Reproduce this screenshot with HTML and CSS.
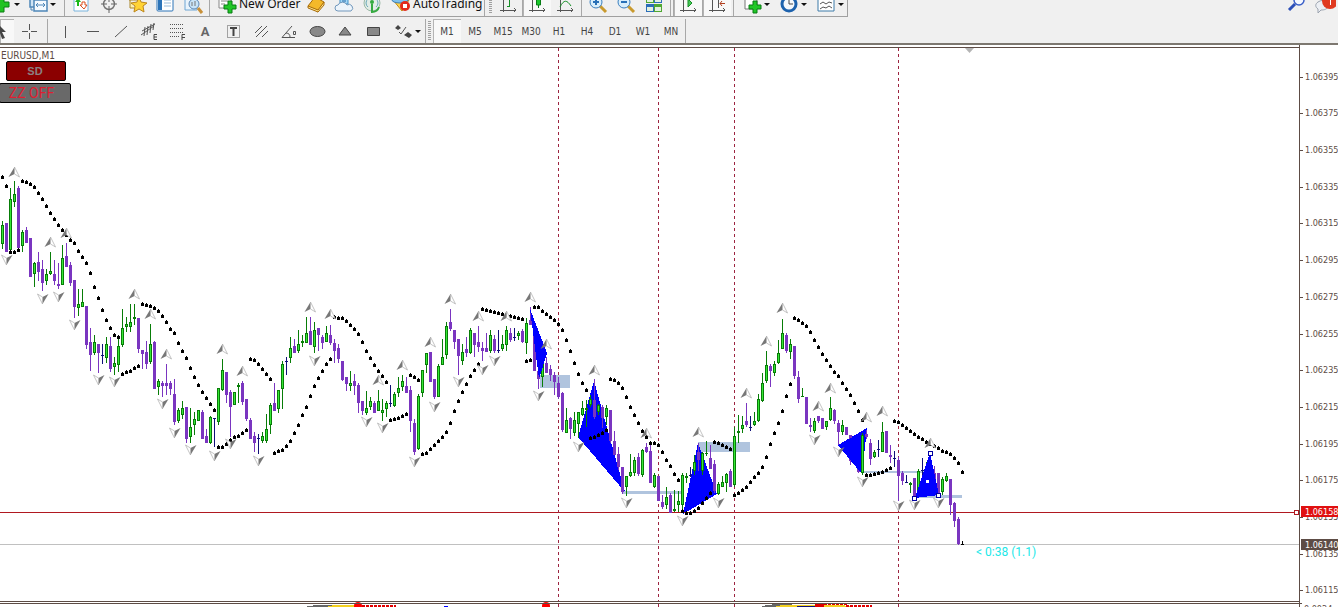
FILE: index.html
```html
<!DOCTYPE html>
<html lang="en">
<head>
    <meta charset="UTF-8">
    <meta name="viewport" content="width=device-width, initial-scale=1.0">
    <title>EURUSD,M1</title>
    <link rel="stylesheet" href="styles.css">
</head>
<body>
    <header class="toolbars">
        <div class="bar bar-main">
            <div class="group group-main">
                <button class="tool new-chart" aria-label="New chart"><svg class="icon plus" viewBox="0 0 24 24"><path d="M9 5h5v5h5v5h-5v5H9v-5H4v-5h5z" fill="#22c322" stroke="#0a7d12"/></svg><span class="arrow"></span></button>
                <button class="tool profiles" aria-label="Profiles"><svg class="icon" viewBox="0 0 24 24"><path d="M4 4h14v11H4z" fill="#cfe4f5" stroke="#4d86b8" stroke-width="1.500"/><path d="M8 8h13v11H8z" fill="#f4faff" stroke="#4d86b8" stroke-width="1.500"/><path d="M10 13h9M12 11l-2 2 2 2M17 11l2 2-2 2M5 15v3h2" fill="none" stroke="#4d86b8"/></svg><span class="arrow"></span></button>
                <span class="sep"></span>
                <button class="tool" aria-label="Market watch"><svg class="icon" viewBox="0 0 24 24"><path d="M5 3h14v16H5z" fill="#fff" stroke="#79b3dc"/><path d="M9 6l3 4h-2v4H8v-4H6z" fill="#19b81c"/><path d="M15 17l-4-4h2v-3h3v3h2z" fill="#fff" stroke="#d9501e"/></svg></button>
                <button class="tool" aria-label="Data window"><svg class="icon" viewBox="0 0 24 24"><circle cx="12" cy="12" r="5.500" fill="none" stroke="#777" stroke-width="1.500"/><path d="M12 3v7M12 14v7M4 12h6M14 12h6" stroke="#666"/></svg></button>
                <button class="tool" aria-label="Navigator"><svg class="icon" viewBox="0 0 24 24"><path d="M4 3h9v5H4zM5 8v8h4" fill="#fff2a8" stroke="#a9862d"/><path d="M14 5l2 5 6 1-4 3 1 6-5-3-5 3 1-6-4-3 6-1z" fill="#ffd335" stroke="#bd861d"/></svg></button>
                <button class="tool" aria-label="Terminal"><svg class="icon" viewBox="0 0 24 24"><rect x="4" y="3" width="16" height="16" rx="1" fill="#fff" stroke="#2d74b8"/><path d="M5 4h4v14H5z" fill="#2d74b8"/><path d="M11 8h7M11 11h7M11 14h7" stroke="#9bbcda"/></svg></button>
                <button class="tool" aria-label="Strategy tester"><svg class="icon" viewBox="0 0 24 24"><path d="M4 3h12v15H4z" fill="#e8f3fc" stroke="#6fa6d4"/><circle cx="13" cy="12" r="5" fill="#c8e4f7" stroke="#5d88b4"/><path d="M11 14v-4M14 14v-5" stroke="#777"/><path d="M17 16l4 5" stroke="#c89038" stroke-width="3"/></svg></button>
                <span class="sep"></span>
                <button class="tool new-order"><svg class="icon" viewBox="0 0 24 24"><path d="M4 3h12v14H4z" fill="#fff" stroke="#888"/><path d="M6 7h7M6 10h7M6 13h4" stroke="#888"/><path d="M13 10h4v4h4v4h-4v4h-4v-4H9v-4h4z" fill="#21c727" stroke="#087d15"/></svg>New Order</button>
                <button class="tool" aria-label="MetaEditor"><svg class="icon" viewBox="0 0 24 24"><path d="M4 14l7-9 9 5-6 10z" fill="#f4b92a" stroke="#a76b0a"/><path d="M4 14l10 4 6-8v3l-6 7L4 16z" fill="#ffe58a" stroke="#a76b0a"/></svg></button>
                <button class="tool" aria-label="Virtual hosting"><svg class="icon" viewBox="0 0 24 24"><path d="M8 3h8v9H8z" fill="#a6d8f7" stroke="#3f8fc6"/><path d="M10 6h4M10 9h4" stroke="#276ba8"/><path d="M6 19a3 3 0 0 1 0-6 5 5 0 0 1 9 0 3 3 0 0 1 4 6z" fill="#edf4fb" stroke="#7298bc"/></svg></button>
                <button class="tool" aria-label="Signals"><svg class="icon" viewBox="0 0 24 24"><circle cx="12" cy="11" r="8" fill="#e2ece6" stroke="#9ab9a6"/><path d="M8 15a5 5 0 0 1 0-8M16 15a5 5 0 0 0 0-8" fill="none" stroke="#6aa9b8"/><path d="M12 12v8c3 0 6-2 7-5" fill="none" stroke="#35aa40" stroke-width="2"/><circle cx="12" cy="10" r="2" fill="#35aa40"/></svg></button>
                <button class="tool auto"><svg class="icon" viewBox="0 0 24 24"><path d="M4 9h16l-7 11z" fill="#ffd34c" stroke="#c28b14"/><ellipse cx="11" cy="9" rx="8" ry="3" fill="#7ec0ee" stroke="#3d7eb6"/><circle cx="16" cy="15" r="5" fill="#e22b1c"/><path d="M14 13h4v4h-4z" fill="#fff"/></svg>AutoTrading</button>
                <span class="sep"></span>
                <span class="grip"></span>
                <button class="tool" aria-label="Bar chart"><svg class="icon" viewBox="0 0 24 24"><path d="M7.500 3v17M4 18.500h16M18 16l2 2-2 2" fill="none" stroke="#555"/><path d="M13.500 5v10M11 14.500h3M14 7.500h3" stroke="#168f26"/></svg></button>
                <span class="sep tight"></span>
                <button class="tool pressed" aria-label="Candlesticks"><svg class="icon" viewBox="0 0 24 24"><path d="M7.500 3v17M4 18.500h16M18 16l2 2-2 2" fill="none" stroke="#555"/><path d="M13.500 3v13" stroke="#087d15"/><path d="M11.500 5h4v8h-4z" fill="#1ac62a" stroke="#087d15"/></svg></button>
                <button class="tool" aria-label="Line chart"><svg class="icon" viewBox="0 0 24 24"><path d="M7.500 3v17M4 18.500h16M18 16l2 2-2 2" fill="none" stroke="#555"/><path d="M7 15c4-8 7-7 11-1" fill="none" stroke="#168f26"/></svg></button>
                <span class="sep"></span>
                <button class="tool" aria-label="Zoom in"><svg class="icon" viewBox="0 0 24 24"><path d="M14 14l6 6" stroke="#c99a2e" stroke-width="3"/><circle cx="10" cy="10" r="6" fill="#d8eefb" stroke="#3b7fbf"/><path d="M7 10h6M10 7v6" stroke="#2870b7" stroke-width="2"/></svg></button>
                <button class="tool" aria-label="Zoom out"><svg class="icon" viewBox="0 0 24 24"><path d="M14 14l6 6" stroke="#c99a2e" stroke-width="3"/><circle cx="10" cy="10" r="6" fill="#d8eefb" stroke="#3b7fbf"/><path d="M7 10h6" stroke="#2870b7" stroke-width="2"/></svg></button>
                <button class="tool" aria-label="Tile windows"><svg class="icon" viewBox="0 0 24 24"><path d="M4 3h8v8H4zM12 12h8v8h-8z" fill="#50a832"/><path d="M12 3h8v8h-8zM4 12h8v8H4z" fill="#2c6eb9"/><path d="M5 6h6v4H5zM13 6h6v4h-6zM5 15h6v4H5zM13 15h6v4h-6z" fill="#e3f1df"/></svg></button>
                <span class="sep"></span>
                <span class="sep tight"></span>
                <button class="tool pressed" aria-label="Auto scroll"><svg class="icon" viewBox="0 0 24 24"><path d="M7.500 3v17M4 18.500h16M18 16l2 2-2 2" fill="none" stroke="#555"/><path d="M12 7l4 4-4 4z" fill="#49c958" stroke="#168f26"/></svg></button>
                <span class="sep tight"></span>
                <button class="tool pressed" aria-label="Chart shift"><svg class="icon" viewBox="0 0 24 24"><path d="M7.500 3v17M4 18.500h16M18 16l2 2-2 2M13.500 3v13" fill="none" stroke="#555"/><path d="M20 11.500h-5M17 9l-2 2.500 2 2.500" fill="none" stroke="#b13e1e"/></svg></button>
                <span class="sep"></span>
                <button class="tool drop" aria-label="Indicators"><svg class="icon" viewBox="0 0 24 24"><path d="M5 3h12v14H5z" fill="#fff" stroke="#777"/><path d="M13 9h4v4h4v4h-4v4h-4v-4H9v-4h4z" fill="#21c727" stroke="#087d15"/></svg><span class="arrow"></span></button>
                <button class="tool drop" aria-label="Periods"><svg class="icon" viewBox="0 0 24 24"><circle cx="12" cy="12" r="7" fill="#f4f8fc" stroke="#1d62ad" stroke-width="3"/><path d="M12 7v5h4" fill="none" stroke="#444"/></svg><span class="arrow"></span></button>
                <button class="tool drop" aria-label="Templates"><svg class="icon" viewBox="0 0 24 24"><path d="M4 3h16v16H4z" fill="#fff" stroke="#3c7aa8"/><path d="M4 4h16v4H4z" fill="#69a5d0"/><path d="M6 12l3-2 3 2 3-2 3 1M6 17l3-2 3 1 3-2 3 2" fill="none" stroke="#555"/></svg><span class="arrow"></span></button>
            </div>
            <div class="corner">
                <button class="tool" aria-label="Search"><svg class="icon" viewBox="0 0 24 24"><circle cx="15" cy="8" r="5" fill="#f5f8ff" stroke="#3a5fc8" stroke-width="1.500"/><path d="M11 12l-6 6" stroke="#2c4fb8" stroke-width="3"/></svg></button>
                <button class="tool" aria-label="Messages"><svg class="icon" viewBox="0 0 24 24"><path d="M6 10c6-4 12 0 10 5-2 3-5 3-7 3l-3 3v-4c-3-2-3-5 0-7z" fill="#eceff4" stroke="#9aa2ae"/><circle cx="18" cy="9" r="8" fill="#e03a20"/><path d="M18.500 3v10" stroke="#fff"/></svg></button>
            </div>
        </div>
        <div class="bar bar-draw">
            <button class="tool cursor pressed" aria-label="Cursor"><svg class="icon" viewBox="0 0 24 24"><path d="M7 4l9 9h-4l3 6-3 1-2-6-3 3z" fill="#444"/></svg></button>
            <button class="tool" aria-label="Crosshair"><svg class="icon" viewBox="0 0 24 24"><path d="M12.500 5v6M12.500 14v6M5 12.500h6M14 12.500h6" stroke="#555"/></svg></button>
            <span class="sep"></span>
            <button class="tool" aria-label="Vertical line"><svg class="icon" viewBox="0 0 24 24"><path d="M12.500 7v12" stroke="#555"/></svg></button>
            <button class="tool" aria-label="Horizontal line"><svg class="icon" viewBox="0 0 24 24"><path d="M6 12.500h12" stroke="#555"/></svg></button>
            <button class="tool" aria-label="Trendline"><svg class="icon" viewBox="0 0 24 24"><path d="M6 18L18 7" stroke="#555"/></svg></button>
            <button class="tool" aria-label="Equidistant channel"><svg class="icon" viewBox="0 0 24 24"><path d="M4 16L17 7M5 12L18 5M8 8l-1 9M11 7l-1 9M14 5l-1 9M17 4l-1 7" stroke="#555"/><path d="M20 15.500h-3v5h3M17 18h3" fill="none" stroke="#444"/></svg></button>
            <button class="tool" aria-label="Fibonacci"><svg class="icon" viewBox="0 0 24 24"><path d="M5 5.500h14M5 9.500h14M5 13.500h14M5 17.500h9" stroke="#555" stroke-dasharray="1 1"/><path d="M20 15.500h-3V21M17 18.500h3" fill="none" stroke="#444"/></svg></button>
            <button class="tool letter">A</button>
            <button class="tool" aria-label="Text label"><svg class="icon" viewBox="0 0 24 24"><path d="M6.500 6.500h12v12h-12z" fill="none" stroke="#555" stroke-dasharray="1 1"/><path d="M9 9h7M12.500 9v8" stroke="#444" stroke-width="2"/></svg></button>
            <button class="tool" aria-label="Parallel lines"><svg class="icon" viewBox="0 0 24 24"><path d="M6 14l7-7M7 18L18 7M13 18l6-6" stroke="#555"/></svg></button>
            <button class="tool" aria-label="Angle"><svg class="icon" viewBox="0 0 24 24"><path d="M15 7L5 18.500h13M9 14c3 0 4 2 4 4" fill="none" stroke="#555"/><path d="M16.500 12.500h2v3h-2z" fill="none" stroke="#555"/></svg></button>
            <button class="tool" aria-label="Ellipse"><svg class="icon" viewBox="0 0 24 24"><ellipse cx="12.500" cy="12.500" rx="7.500" ry="5" fill="#888" stroke="#444"/></svg></button>
            <button class="tool" aria-label="Triangle"><svg class="icon" viewBox="0 0 24 24"><path d="M12 8l6 8H6z" fill="#888" stroke="#444"/></svg></button>
            <button class="tool" aria-label="Rectangle"><svg class="icon" viewBox="0 0 24 24"><path d="M6.500 8.500h12v8h-12z" fill="#888" stroke="#444"/></svg></button>
            <button class="tool drop" aria-label="Arrows"><svg class="icon" viewBox="0 0 24 24"><path d="M7 6l3 3-3 2-3-2zM17 13l4 3-3 3-5-3z" fill="#444"/><path d="M8 13l2 2 5-7" fill="none" stroke="#555"/></svg><span class="arrow"></span></button>
            <span class="sep tight"></span>
            <span class="grip"></span>
            <button class="tool pressed">M1</button>
            <button class="tool">M5</button>
            <button class="tool">M15</button>
            <button class="tool">M30</button>
            <button class="tool">H1</button>
            <button class="tool">H4</button>
            <button class="tool">D1</button>
            <button class="tool">W1</button>
            <button class="tool">MN</button>
            <span class="sep tight"></span>
        </div>
    </header>

    <main class="workspace">
        <div class="chart">
            <svg class="plot">
                <g id="plot" transform="translate(0 -45)"></g>
            </svg>
            <div class="overlay">
                <span class="symbol">EURUSD,M1</span>
                <button class="sd">SD</button>
                <button class="zz">ZZ OFF</button>
            </div>
        </div>
        <svg class="axis">
            <g id="axis" transform="translate(0 -45)"></g>
        </svg>
    </main>

    <script src="chart.js"></script>
</body>
</html>
```
FILE: styles.css
```css
body {
    margin: 0;
    height: 100vh;
    display: flex;
    flex-direction: column;
    overflow: hidden;
    background: #fff;
    font-family: "DejaVu Sans Condensed", "DejaVu Sans", sans-serif;
    font-size: 10px;
}
.toolbars {
    background: #f0f0f0;
    border-bottom: 2px solid #7d7870;
    overflow: hidden;
}
.bar {
    display: flex;
}
.bar-main {
    margin-top: -8px;
    justify-content: space-between;
}
.group {
    display: flex;
    align-items: center;
}
.group-main {
    height: 24px;
    border-right: 1px solid #a0a0a0;
    border-bottom: 1px solid #a0a0a0;
}
.corner {
    display: flex;
    height: 24px;
}
.bar-draw {
    box-sizing: border-box;
    height: 26px;
    padding-top: 2px;
    align-items: center;
}
.tool {
    flex: none;
    display: flex;
    align-items: center;
    justify-content: center;
    width: 28px;
    height: 24px;
    padding: 0;
    border: 0;
    background: none;
    color: #444;
    font: inherit;
}
.pressed {
    background: #f8f8f8;
    box-shadow: inset 1px 1px #b4b4b4;
}
.icon {
    flex: none;
    width: 24px;
    height: 24px;
}
.arrow {
    border: 3px solid transparent;
    border-top-color: #111;
    border-bottom: 0;
}
.new-chart {
    width: 20px;
    justify-content: flex-end;
}
.profiles {
    width: 42px;
}
.new-order, .auto {
    width: 90px;
    justify-content: flex-start;
    padding: 0 0 2px 3px;
    color: #111;
    font-family: "Noto Sans", sans-serif;
    font-size: 12px;
    white-space: nowrap;
}
.auto {
    width: 96px;
}
.drop {
    width: 37px;
}
.bar-draw .drop {
    width: 38px;
}
.cursor {
    width: 14px;
    margin-right: 1px;
    justify-content: flex-end;
}
.letter {
    font-family: Roboto, sans-serif;
    font-size: 13px;
    font-weight: bold;
    color: #666;
}
.sep {
    flex: none;
    width: 1px;
    height: 24px;
    margin: 0 2px;
    background: #a8a8a8;
}
.bar-draw .sep {
    margin: 0 3px 0 4px;
}
.sep.tight, .bar-draw .sep.tight {
    margin: 0;
}
.grip {
    flex: none;
    width: 3px;
    height: 20px;
    margin: 0 2px;
    background: repeating-linear-gradient(#a0a0a0 0 1px, #f0f0f0 1px 2px);
}
.workspace {
    flex: 1;
    min-height: 0;
    display: flex;
}
.chart {
    flex: 1;
    min-width: 0;
    position: relative;
    border-right: 1px solid #5d4c45;
    overflow: hidden;
}
.plot {
    display: block;
    width: 100%;
    height: 100%;
}
.axis {
    flex: none;
    width: 38px;
    height: 100%;
    font-size: 9px;
}
.overlay {
    position: absolute;
    top: 5px;
    left: 0;
    display: flex;
    flex-direction: column;
    align-items: flex-start;
}
.symbol {
    padding-left: 1px;
    line-height: 11px;
    color: #5d4c45;
}
.sd, .zz {
    box-sizing: border-box;
    height: 20px;
    padding: 0;
    border: 1px solid #000;
    border-radius: 2px;
}
.sd {
    width: 60px;
    margin-left: 6px;
    padding-right: 2px;
    background: #8b0000;
    color: #8c8080;
    font: bold 11px "Liberation Sans Narrow", "Liberation Sans", sans-serif;
}
.zz {
    width: 72px;
    margin: 2px 0 0 -1px;
    padding-right: 7px;
    background: #696969;
    color: #e01e32;
    font: 14px Roboto, sans-serif;
}
.timer {
    font: 12px Roboto, sans-serif;
    fill: #20e8e8;
}
.crisp {
    shape-rendering: crispEdges;
}
```
FILE: chart.js
```js
// one candle every 4px: colour, high, body top, body bottom, low
const candles = `g 221 225 244 249,p 223 223 252 252,g 188 199 250 250,g 181 194 202 207,p 186 188 248 248,g 230 232 246 252
p 227 230 243 243,p 238 238 277 277,g 262 263 274 287,p 252 262 272 281,p 260 269 283 291,g 269 274 281 285,g 252 271 274 275
p 260 274 281 285,p 263 284 286 289,g 245 258 285 285,p 243 256 267 267,p 262 265 283 286,p 280 280 307 318,g 289 304 308 316
g 289 302 307 307,p 306 306 345 349,p 328 342 355 371,g 335 342 353 355,p 344 344 353 373,n 344 355 356 364,g 337 344 358 363
p 337 346 369 372,g 357 363 367 375,g 337 346 365 372,g 309 328 345 347,g 317 324 327 332,g 304 322 327 332,g 304 317 319 325
p 318 318 349 353,p 350 350 354 369,p 341 352 364 369,g 324 344 362 364,p 341 342 389 389,g 379 381 387 395,p 381 383 386 397
p 364 383 386 395,p 381 383 389 395,p 379 394 422 425,g 408 410 421 423,g 401 408 415 419,p 407 407 439 443,g 408 427 437 443
g 412 419 425 435,g 410 410 421 421,p 410 412 439 439,p 429 436 443 443,g 416 417 443 444,n 418 418 419 447,g 388 388 422 425
g 359 370 390 391,p 372 372 395 403,p 390 392 407 437,g 392 392 405 405,g 383 385 387 403,p 381 383 402 405,p 399 399 419 421
p 418 420 439 439,p 432 436 443 452,n 434 438 439 454,g 432 436 441 443,g 414 429 441 443,g 403 405 425 434,p 383 403 411 411
g 390 390 409 413,g 361 364 389 409,n 357 361 362 375,g 337 348 358 363,p 339 346 353 353,g 330 344 351 353,g 335 341 343 347
g 317 333 343 343,p 317 331 345 345,g 322 330 347 353,p 328 328 335 351,p 335 337 343 349,g 326 333 342 342,p 325 335 343 345
p 339 343 351 363,p 344 348 359 363,p 361 361 380 381,p 377 377 384 391,g 371 383 386 391,p 374 381 386 395,p 383 385 403 413
p 401 401 411 415,g 391 408 413 415,g 397 401 407 410,p 401 403 413 413,g 390 401 411 411,g 399 410 413 421,g 401 403 409 417
n 385 403 404 407,g 392 394 406 407,g 377 388 393 397,g 375 381 387 391,p 377 386 393 393,p 386 390 421 432,p 419 423 452 455
g 394 396 449 450,g 370 370 393 397,g 353 353 365 373,p 352 352 382 382,p 379 379 397 399,g 364 366 397 397,g 339 357 365 365
g 322 326 355 359,p 309 322 329 331,p 330 330 342 349,p 339 339 356 375,g 344 352 361 365,p 337 349 353 357,g 328 330 353 354
p 333 333 345 357,p 326 342 347 352,p 342 348 351 361,p 333 348 352 352,g 330 335 351 353,p 335 339 351 353,n 330 350 351 353
g 335 344 349 351,g 326 330 345 351,p 328 333 340 342,n 328 337 338 341,g 331 333 336 340,p 329 331 342 343,g 318 323 343 354
p 307 320 325 325,p 330 330 371 371,p 360 371 379 389,g 354 363 377 387,p 357 363 373 373,p 365 369 375 381,p 372 375 382 395
p 377 383 397 399,p 392 393 430 432,g 408 420 433 433,p 417 418 429 439,g 412 420 433 436,g 412 412 424 438,g 401 408 415 416
g 400 408 410 427,g 395 399 405 407,p 379 400 417 419,g 404 405 412 415,p 405 407 418 428,g 405 408 417 425,p 410 410 441 443
p 431 441 455 455,p 447 454 467 470,p 467 467 492 494,g 476 476 487 496,g 454 472 476 477,g 457 460 473 476,p 453 457 474 476
g 449 450 475 477,p 443 447 452 453,p 443 451 483 483,g 473 475 487 488,p 476 476 501 501,p 495 502 507 509,g 487 497 505 509
p 493 495 513 513,g 490 509 511 512,g 491 501 505 512,g 473 475 505 513,g 473 476 478 483,n 467 475 476 477,g 455 462 471 475
p 443 452 460 471,g 452 453 471 475,g 441 453 454 456,p 445 458 469 469,p 460 464 491 493,g 482 484 494 495,g 476 482 487 487
g 473 474 483 492,p 469 471 487 487,g 427 436 485 487,g 415 431 433 443,g 416 425 429 433,p 403 421 425 427,n 416 427 428 431
g 412 421 425 426,g 394 399 421 422,g 373 383 401 402,g 351 365 381 383,p 364 366 371 387,g 361 364 373 376,g 340 353 363 364
g 319 333 349 349,p 333 335 351 353,g 339 344 352 359,p 346 346 376 379,p 371 377 399 403,g 388 396 397 397,p 397 397 424 424
p 418 425 427 432,g 418 421 431 433,p 416 416 421 423,p 418 418 429 429,g 421 421 427 430,g 397 408 420 421,p 409 410 421 424
p 420 423 432 445,g 420 425 432 435,p 427 427 435 435,p 435 435 461 465,p 436 446 461 464,p 447 461 472 473,g 433 435 473 475
p 430 434 437 439,p 439 443 459 465,g 450 452 457 458,n 440 449 450 457,g 422 432 452 452,p 431 431 453 453,p 445 455 457 463
n 451 458 459 467,p 457 460 476 501,p 471 473 481 485,n 475 482 483 483,g 482 483 485 493,p 478 478 497 498,g 469 471 494 495
n 458 470 471 475,g 462 468 473 475,p 453 467 472 476,p 466 473 481 485,p 473 473 497 497,g 477 479 492 495,g 473 476 481 482
p 479 479 505 515,p 502 503 521 527,p 517 519 544 545,k 541 544 545 545`.split(/[,\n]/).map(c => c.split(' '));

// parabolic SAR, one dot per candle
const sar = [177, 186, 252, 252, 250,
    181, 182, 184, 187, 193, 199, 206, 213, 219, 225, 230, 235, 240, 243, 251, 257, 263, 273, 287, 298, 310, 320, 328, 335, 337,
    374, 372, 371, 368, 366,
    304, 305, 306, 308, 311, 316, 322, 329, 333, 343, 351, 358, 368, 377, 385, 392, 398, 404, 410,
    447, 447, 444, 440, 437, 436, 433, 430,
    359, 360, 364, 369, 374, 379,
    453, 451, 450, 446, 441, 433, 425, 415, 407, 396, 386, 378, 371, 364, 359,
    317, 318, 318, 321, 325, 329, 334, 342, 351, 358, 365, 371, 376, 382,
    420, 419, 418, 416, 414,
    375, 377, 380,
    454, 453, 449, 445, 441, 437, 432, 423, 411, 401, 392, 384, 376, 370, 364,
    309, 310, 311, 312, 313, 314, 315, 316, 317, 318, 319,
    361, 360,
    307, 307, 311, 314, 317, 320, 324, 330, 340, 351, 363, 374, 383, 390,
    438, 437, 435, 433, 430,
    379, 380, 383, 388, 397, 407, 415, 423, 431, 437, 443, 443, 445, 452, 460, 466, 474, 480,
    511, 513, 513, 511, 508, 503, 498, 493,
    442, 443, 445, 447, 449,
    495, 493, 490, 487, 482, 477, 473, 467, 457, 444, 433, 423, 411, 396, 384,
    318, 320, 323, 326, 332, 340, 347, 354, 360, 366, 372, 376, 383, 389, 395, 403, 411, 420,
    475, 475, 474, 473, 472, 470, 468,
    421, 422, 425, 428, 431, 434, 437, 439, 442, 444, 446, 448, 451, 452, 454, 458, 463, 472];

// fractals: x and y of the tip
const fractalsUp = [[14, 167], [50, 237], [66, 228], [134, 289], [150, 309], [166, 349], [222, 344], [242, 366], [310, 302],
    [330, 309], [378, 375], [402, 360], [430, 337], [450, 294], [478, 311], [506, 311], [530, 292], [546, 339], [594, 365],
    [646, 428], [698, 427], [746, 388], [766, 336], [782, 303], [818, 401], [830, 383], [866, 412], [882, 406], [930, 438]];
const fractalsDown = [[6, 265], [42, 304], [58, 302], [74, 330], [98, 385], [114, 387], [162, 409], [174, 438], [190, 455],
    [214, 461], [230, 449], [258, 466], [314, 366], [366, 427], [382, 433], [414, 467], [434, 412], [458, 387], [482, 375],
    [494, 366], [538, 401], [578, 452], [626, 508], [682, 526], [718, 508], [814, 445], [838, 457], [862, 487], [898, 511],
    [914, 510], [938, 508]];

// patterns: some lie under the candles, some cover them
const trianglesBack = ['594,381 578,437 625,492', '698,443 683,514 717,494', '838,445 867,428 862,474'];
const trianglesFront = ['530,309 547,353 539,379', '838,445 860,433 860,472', '930,453 915,498 939,495'];

const colors = { g: '#087d08', p: '#7a35c0', n: '#101078', k: '#000' };
const rect = (x, y, w, h, fill) => `<rect x="${x}" y="${y}" width="${w}" height="${h}" fill="${fill}"/>`;
const triangle = points => `<polygon points="${points}" fill="#00f"/>`;
let out = '';

// zones
out += '<g class="crisp">';
out += rect(540, 375, 30, 13, '#b0c4de') + rect(698, 442, 52, 10, '#b0c4de');
out += rect(622, 491, 62, 3, '#b0c4de') + rect(862, 471, 68, 2, '#b0c4de') + rect(914, 495, 48, 3, '#b0c4de');
out += trianglesBack.map(triangle).join('');

// bid, level and period lines
out += rect(0, 544, '100%', 1, '#c0c0c0') + rect(0, 512, '100%', 1, '#b01820');
[558, 658, 734, 898].forEach(x => {
    out += `<path d="M${x}.5 48V601M${x}.5 604V620" stroke="#9c2440" stroke-dasharray="3 3"/>`;
});

candles.forEach(([kind, high, top, bottom, low], i) => {
    const x = 2 + i * 4;
    const h = Math.max(1, bottom - top);
    out += rect(x, high, 1, Math.max(1, low - high), colors[kind]);
    out += rect(x - 1, top, 3, h, colors[kind]);
    if (kind === 'g' && h > 2) {
        out += rect(x, +top + 1, 1, h - 2, '#35e835');
    }
});
out += trianglesFront.map(triangle).join('');
sar.forEach((y, i) => {
    const x = 2 + i * 4;
    out += rect(x - 1, y - 1, 3, 3, '#000') + rect(x, y - 2, 1, 1, '#000');
});
out += '</g>';

fractalsUp.forEach(([x, y]) => {
    out += `<path d="M${x}.5 ${y}l-6 10 6-3z" fill="#777"/><path d="M${x}.5 ${y}l5 10-5-3z" fill="#fff" stroke="#aaa" stroke-width=".7"/>`;
});
fractalsDown.forEach(([x, y]) => {
    out += `<path d="M${x}.5 ${y}l6-10-6 3z" fill="#777"/><path d="M${x}.5 ${y}l-5-10 5 3z" fill="#fff" stroke="#aaa" stroke-width=".7"/>`;
});

// handles of the selected triangle
[[930, 453], [914, 498], [938, 495]].forEach(([x, y]) => {
    out += `<rect x="${x - 1.5}" y="${y - 1.5}" width="4" height="4" fill="#fff" stroke="#0000a0"/>`;
});
out += rect(926, 480, 3, 3, '#fff');

out += '<path d="M965 48h9l-4.500 5z" fill="#b4b4b4"/>';
out += '<text class="timer" x="976" y="556">&lt; 0:38 (1.1)</text>';

// indicator window
out += '<g class="crisp">';
out += '<path d="M307 607v-1l12-1h17v2z" fill="#666"/><path d="M326 607l8-2h22v2z" fill="#f4d020"/>';
out += '<path d="M762 607v-1l20-3h10v4z" fill="#666"/><path d="M774 607l8-2h60l10 2z" fill="#f4d020"/>';
out += rect(797, 606, 18, 1, '#101078') + rect(815, 604, 9, 3, '#e00000') + rect(444, 606, 4, 1, '#00f');
out += '<path d="M362 606h34M824 604h24M846 606h26" stroke="#e00000" stroke-width="2" stroke-dasharray="3 1"/></g>';
out += '<circle cx="358" cy="606" r="4" fill="#f00"/><circle cx="546" cy="606" r="4" fill="#f00"/>';

// window frames
out += rect(0, 47, '100%', 1, '#5d4c45') + rect(0, 601, '100%', 1, '#5d4c45') + rect(0, 603, '100%', 1, '#5d4c45');
out += '<svg x="100%" overflow="visible"><rect x="-4.500" y="510.500" width="4" height="4" fill="#fff" stroke="#b01820"/></svg>';
document.getElementById('plot').innerHTML = out;

// price scale
let axis = '';
for (let i = 0; i < 15; i++) {
    const y = Math.round(76.6 + i * 36.7);
    axis += rect(0, y, 3, 1, '#5d4c45');
    axis += `<text x="5" y="${y + 3}" fill="#5d4c45">${(1.06395 - i * 0.0002).toFixed(5)}</text>`;
}
axis += rect(1, 506, 37, 11, '#e01010') + '<text x="5" y="515" fill="#fff">1.06158</text>';
axis += rect(1, 539, 37, 11, '#5d4c45') + '<text x="5" y="548" fill="#fff">1.06140</text>';
axis += rect(0, 603, 2, 1, '#5d4c45') + '<text x="4" y="612" fill="#5d4c45">0.0024</text>';
document.getElementById('axis').innerHTML = axis;
```
